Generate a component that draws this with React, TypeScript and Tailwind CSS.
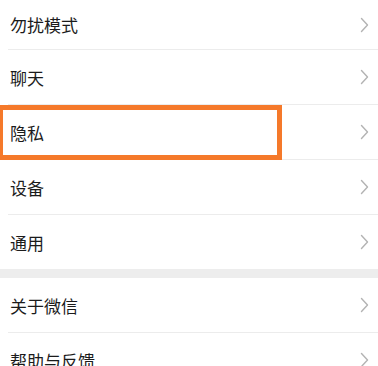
import React from "react";

function Chevron() {
  return (
    <svg width="9" height="16" viewBox="0 0 9 16" className="shrink-0">
      <path d="M1.5 1.5 L7.5 8 L1.5 14.5" fill="none" stroke="#b3b3b3" strokeWidth="1.4" strokeLinecap="round" strokeLinejoin="round" />
    </svg>
  );
}

function Row({ label, h, border, highlight }: { label: string; h: string; border?: boolean; highlight?: boolean }) {
  return (
    <div className="relative">
      <div className={`flex items-center justify-between pl-[10px] pr-[9px] ${h}`}>
        <span className="text-[17px] text-[#1b1b1b] leading-none">{label}</span>
        <Chevron />
      </div>
      {border && <div className="ml-[8px] h-px bg-[#ececec]" />}
      {highlight && (
        <div className="absolute left-[-2px] top-[0px] w-[284px] h-[55px] border-[5px] border-[#f5792a]" />
      )}
    </div>
  );
}

export default function App() {
  return (
    <div className="w-[378px] h-[366px] overflow-hidden bg-white" style={{ fontFamily: '"Noto Sans CJK SC", "Noto Sans", sans-serif' }}>
      <Row label="勿扰模式" h="h-[49px]" border />
      <Row label="聊天" h="h-[54px]" border />
      <Row label="隐私" h="h-[54px]" border highlight />
      <Row label="设备" h="h-[54px]" border />
      <Row label="通用" h="h-[54px]" />
      <div className="h-[9px] bg-[#ededed]" />
      <Row label="关于微信" h="h-[54px]" border />
      <Row label="帮助与反馈" h="h-[54px]" />
    </div>
  );
}
